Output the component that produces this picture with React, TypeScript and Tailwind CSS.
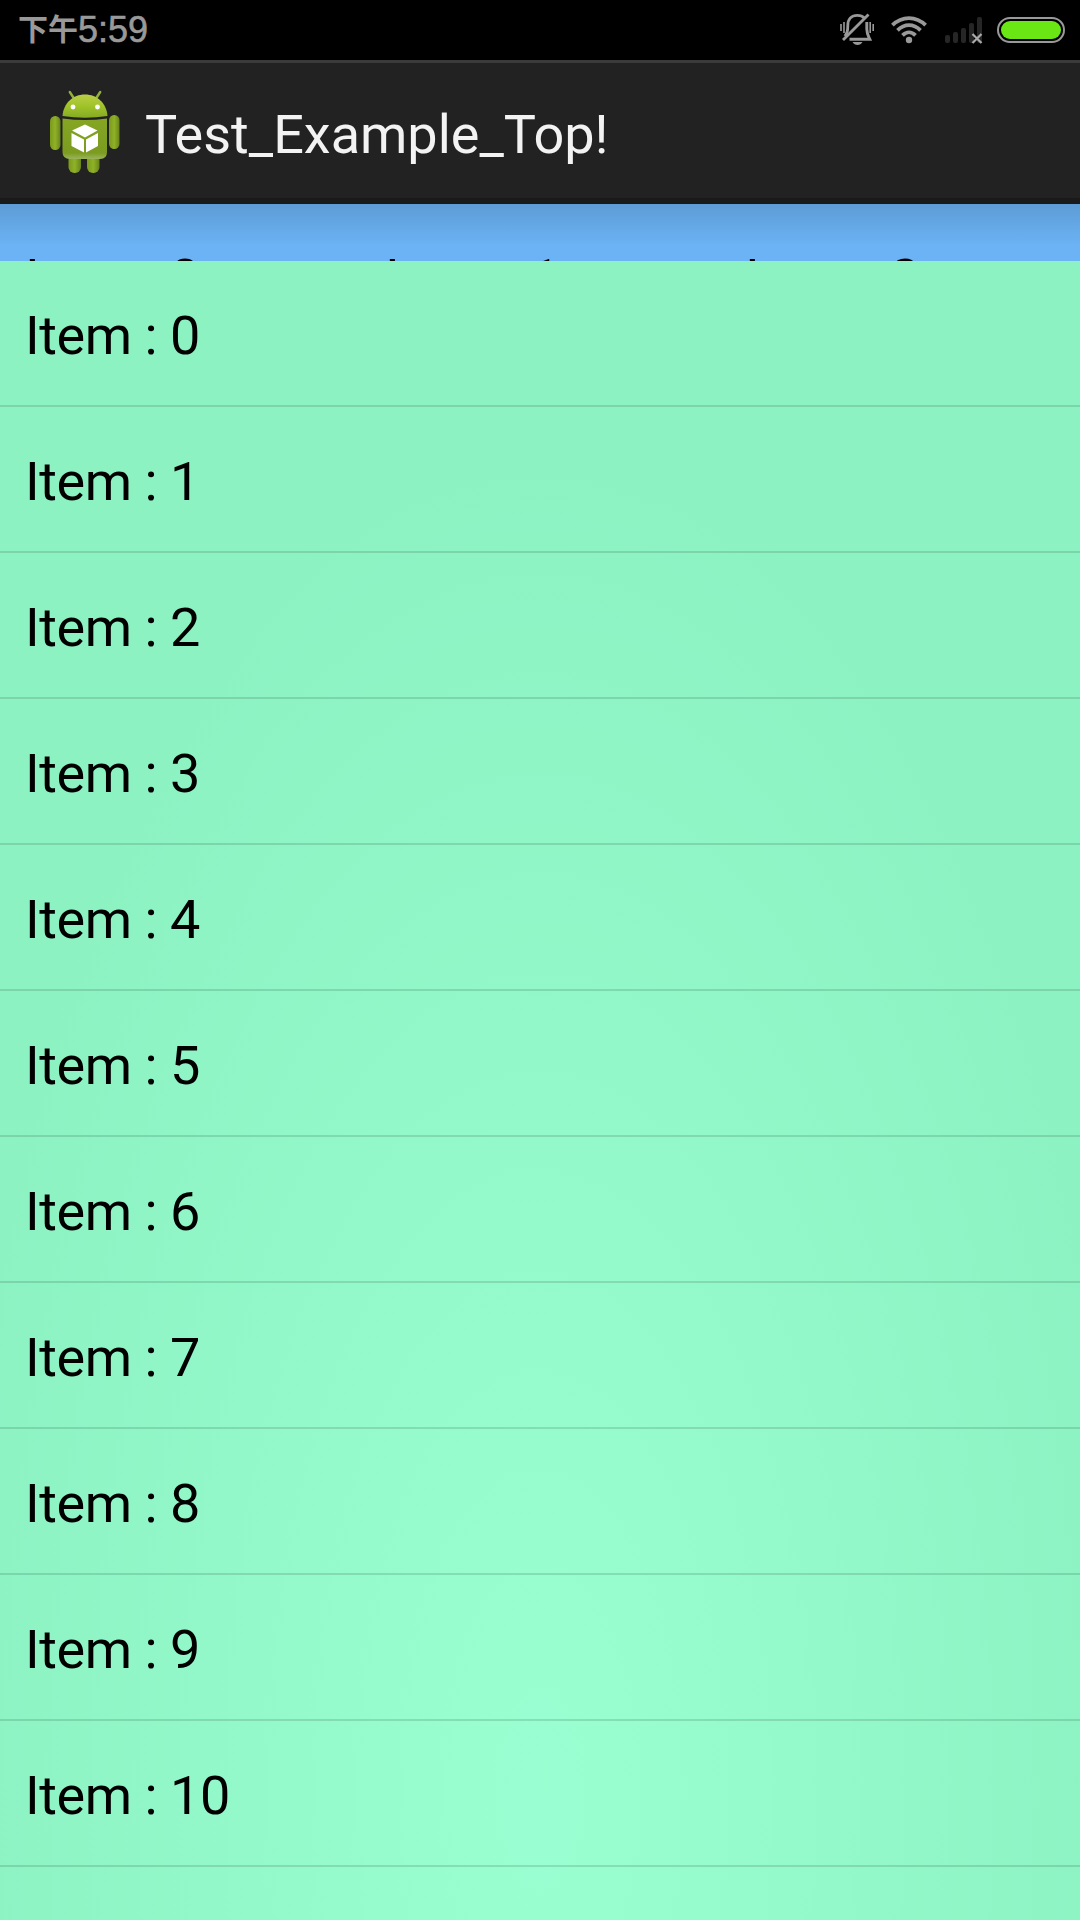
const GRID_ITEMS = [0, 1, 2];
const LIST_ITEMS = Array.from({ length: 12 }, (_, i) => i);

function MutedBellIcon() {
  return (
    <svg width="36" height="34" viewBox="0 0 36 34" fill="none" stroke="#999">
      <path d="M4.800 24C6.800 21.500 7.800 20 7.800 13.500C7.800 7 11.500 3.400 17.300 3.400C20.500 3.400 22.800 4.300 24.300 6" strokeWidth="2.800" />
      <path d="M26.800 10V17C26.800 21.500 28.300 24 29.800 27.200H9.500" strokeWidth="2.900" />
      <path d="M3 28L28.500 2.500" strokeWidth="2.800" />
      <path d="M12.500 30H22.500C21.500 32 19.500 33 17.500 33S13.500 32 12.500 30Z" fill="#999" stroke="none" />
      <path d="M1 12V19M33.200 12V19M4 10V21M30.200 10V21" strokeWidth="1.600" />
    </svg>
  );
}

function WifiIcon() {
  return (
    <svg width="36" height="28" viewBox="0 0 36 28" fill="none" stroke="#999" strokeWidth="3.800">
      <path d="M1.400 9.200C11 -0.300 25 -0.300 34.600 9.200" />
      <path d="M6.500 14.300C13.500 7.500 22.500 7.500 29.500 14.300" />
      <path d="M11.500 19.300C15.500 15.300 20.500 15.300 24.500 19.300" />
      <circle cx="18" cy="24" r="3.200" fill="#999" stroke="none" />
    </svg>
  );
}

function NoSignalIcon() {
  return (
    <svg width="38" height="27" viewBox="0 0 38 27">
      <g fill="#262626">
        <rect x="0" y="18" width="5" height="8" rx="2" />
        <rect x="8" y="15" width="5" height="11" rx="2" />
        <rect x="16" y="11" width="5" height="15" rx="2" />
        <rect x="24" y="6" width="5" height="20" rx="2" />
        <rect x="32" y="0" width="5" height="26" rx="2" />
      </g>
      <path d="M27.500 17L36.500 26M36.500 17L27.500 26" stroke="#aaa" strokeWidth="2.200" />
    </svg>
  );
}

function AndroidIcon() {
  return (
    <svg width="96" height="96" viewBox="0 0 96 96">
      <defs>
        <linearGradient id="head" x1="0" y1="0" x2="0" y2="1">
          <stop offset="0" stopColor="#b9cf45" />
          <stop offset="0.500" stopColor="#a0c32a" />
          <stop offset="1" stopColor="#86ab22" />
        </linearGradient>
        <linearGradient id="body" x1="0" y1="0" x2="0" y2="1">
          <stop offset="0" stopColor="#86a524" />
          <stop offset="0.850" stopColor="#7b9c20" />
          <stop offset="1" stopColor="#9ab45c" />
        </linearGradient>
        <linearGradient id="limb" x1="0" y1="0" x2="1" y2="0">
          <stop offset="0" stopColor="#7a9a1d" />
          <stop offset="0.500" stopColor="#8fb127" />
          <stop offset="1" stopColor="#68851a" />
        </linearGradient>
      </defs>
      <path d="M33.800 9L38 15.500M64.200 9L60 15.500" stroke="#93b03a" strokeWidth="2.400" strokeLinecap="round" />
      <path d="M26.500 33C27.500 20 37 11.500 49 11.500S70.500 20 71.500 33Q49 36.500 26.500 33Z" fill="url(#head)" />
      <circle cx="37" cy="24" r="2.400" fill="#fff" />
      <circle cx="61.500" cy="24" r="2.400" fill="#fff" />
      <rect x="14" y="33" width="10.500" height="34" rx="5.200" fill="url(#limb)" />
      <rect x="73" y="32" width="10.500" height="34" rx="5.200" fill="url(#limb)" />
      <rect x="32.500" y="65" width="12.500" height="25" rx="6" fill="url(#limb)" />
      <rect x="51" y="65" width="12.500" height="25" rx="6" fill="url(#limb)" />
      <path d="M26.500 35.500Q49 38.500 71 35.500V69Q71 76 64 76H34Q26.500 76 26.500 69Z" fill="url(#body)" />
      <path d="M49 41.500L61.500 47.500L49 54.500L36 47.500Z" fill="#fff" />
      <path d="M35.500 50L48 56.500V69.500L35.500 63Z" fill="#fff" />
      <path d="M62 50L50 56.500V69.500L62 63Z" fill="#fff" />
    </svg>
  );
}

function StatusBar() {
  return (
    <div className="flex h-[60px] shrink-0 items-start justify-between bg-black pl-[18px] pr-[15px]">
      <div className="flex items-start leading-[44px] text-[#999]">
        <span className="pt-[5px] font-['Noto_Sans_CJK_SC',sans-serif] text-[30px] font-bold">下午</span>
        <span className="pt-[8px] font-['Liberation_Sans',sans-serif] text-[36px] [-webkit-text-stroke:0.6px_#999]">
          5:59
        </span>
      </div>
      <div className="flex items-start">
        <div className="mr-[15px] mt-[12px]">
          <MutedBellIcon />
        </div>
        <div className="mr-[18px] mt-[16px]">
          <WifiIcon />
        </div>
        <div className="mr-[14px] mt-[17px]">
          <NoSignalIcon />
        </div>
        <div className="mt-[17px] h-[26px] w-[68px] rounded-full border-2 border-[#999] p-[2px]">
          <div className="h-full rounded-full bg-[#6ae615]" />
        </div>
      </div>
    </div>
  );
}

function TitleBar() {
  return (
    <header className="flex h-36 shrink-0 items-center border-b-[6px] border-t-[3px] border-b-[#1a1a1a] border-t-[#3b3b3b] bg-[#222] pl-9">
      <AndroidIcon />
      <h1 className="ml-[13px] pt-[8px] text-[54px] leading-[64px] text-[#f3f3f3]">Test_Example_Top!</h1>
    </header>
  );
}

export default function App() {
  return (
    <div className="flex h-[1920px] w-[1080px] flex-col overflow-hidden bg-[#222] font-['Roboto',sans-serif] text-black">
      <StatusBar />
      <TitleBar />

      {/* Top grid, mostly covered by the list */}
      <div className="relative grid h-[57px] shrink-0 grid-cols-3 overflow-hidden bg-[#6bb3f5]">
        {GRID_ITEMS.map((item) => (
          <div
            key={item}
            className="flex h-36 items-center pl-[25px] pt-[5px] text-[54px] leading-[64px] tracking-[-0.45px]"
          >
            Item : {item}
          </div>
        ))}
        <div className="absolute inset-x-0 top-0 h-[42px] bg-linear-to-b from-black/13 to-transparent" />
      </div>

      <ul className="flex-1 overflow-hidden bg-[radial-gradient(ellipse_600px_1350px_at_540px_1530px,#99ffd2_0%,#98fed0_12%,#8cf2c2_100%)]">
        {LIST_ITEMS.map((item) => (
          <li
            key={item}
            className="flex h-[146px] items-center border-b-2 border-black/12 pl-[25px] pt-[5px] text-[54px] leading-[64px] tracking-[-0.45px]"
          >
            Item : {item}
          </li>
        ))}
      </ul>
    </div>
  );
}
